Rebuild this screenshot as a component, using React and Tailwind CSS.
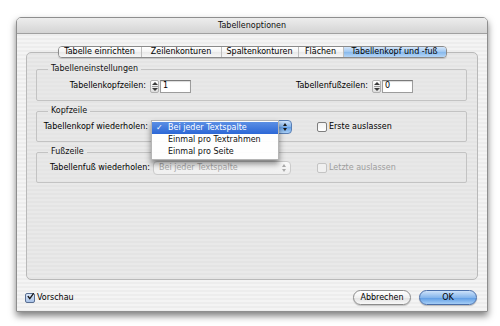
import React from 'react';

const tabs = [
  { label: 'Tabelle einrichten', w: 'w-[82px]' },
  { label: 'Zeilenkonturen', w: 'w-[80px]' },
  { label: 'Spaltenkonturen', w: 'w-[77px]' },
  { label: 'Flächen', w: 'w-[45px]' },
  { label: 'Tabellenkopf und -fuß', w: 'w-[103px]', active: true },
];

const menuItems = ['Bei jeder Textspalte', 'Einmal pro Textrahmen', 'Einmal pro Seite'];

const Stepper = () => (
  <div className="w-[9px] h-[13px] flex flex-col items-center justify-center gap-[1px] border border-[#b0b0b0] rounded-[2px] bg-gradient-to-b from-white to-[#dedede]">
    <span className="w-0 h-0 border-x-[3px] border-x-transparent border-b-[3px] border-b-[#3a3a3a]" />
    <span className="w-[6px] h-px bg-[#9a9a9a]" />
    <span className="w-0 h-0 border-x-[3px] border-x-transparent border-t-[3px] border-t-[#3a3a3a]" />
  </div>
);

const NumberField = ({ value }) => (
  <div className="flex items-center gap-[1px]">
    <Stepper />
    <div className="w-[31px] h-[13px] bg-white border border-[#9c9c9c] border-t-[#7a7a7a] shadow-[inset_0_1px_1px_rgba(0,0,0,0.15)] flex items-center pl-[2px]">
      {value}
    </div>
  </div>
);

const Arrows = ({ color }) => (
  <div className="flex flex-col items-center gap-[2px]">
    <span className={`w-0 h-0 border-x-[2px] border-x-transparent border-b-[3px] ${color === 'dark' ? 'border-b-[#1a1a1a]' : 'border-b-[#aaaaaa]'}`} />
    <span className={`w-0 h-0 border-x-[2px] border-x-transparent border-t-[3px] ${color === 'dark' ? 'border-t-[#1a1a1a]' : 'border-t-[#aaaaaa]'}`} />
  </div>
);

const CheckBox = ({ checked, disabled }) => (
  <span
    className={`w-[10px] h-[10px] rounded-[2px] border flex items-center justify-center ${
      disabled
        ? 'border-[#c4c4c4] bg-[#f0f0f0]'
        : checked
        ? 'border-[#5a6f92] bg-gradient-to-b from-[#dbe7f7] to-[#a9c3e8]'
        : 'border-[#7e7e7e] bg-gradient-to-b from-[#f2f2f2] to-white'
    }`}
  >
    {checked && (
      <svg width="9" height="9" viewBox="0 0 9 9" className="-mt-[2px] ml-[1px]">
        <path d="M1.5 4.5 L3.6 7.2 L8.2 0.8" stroke="#1b1b1b" strokeWidth="1.7" fill="none" strokeLinecap="round" />
      </svg>
    )}
  </span>
);

const Group = ({ title, children }) => (
  <fieldset className="border border-[#c3c3c3] rounded-[2px] px-[6px] pb-[7px] bg-[#e6e6e6]/40">
    <legend className="ml-[5px] px-[3px] h-[10px] leading-[10px] text-[#111]">{title}</legend>
    {children}
  </fieldset>
);

export default function App() {
  return (
    <div className="w-[500px] h-[326px] bg-white pt-[17px] pl-[16px] font-['DejaVu_Sans',sans-serif] text-[8px] text-black">
      <div className="w-[472px] h-[295px] rounded-t-[5px] border border-[#8e8e8e] shadow-[0_4px_7px_rgba(0,0,0,0.5)] overflow-hidden flex flex-col bg-[repeating-linear-gradient(180deg,#ededed_0px,#ededed_2px,#f4f4f4_2px,#f4f4f4_4px)]">
        {/* Title bar */}
        <div className="h-[16px] flex items-center justify-center border-b border-[#a0a0a0] bg-[linear-gradient(180deg,#ededed,#d4d4d4)] text-[#111]">
          Tabellenoptionen
        </div>

        <div className="flex flex-col px-[9px] pt-[12px]">
          {/* Tabs */}
          <div className="relative z-10 flex justify-center h-[12px]">
            <div className="flex h-[12px] rounded-[4px] border border-[#8a8a8a] overflow-hidden shadow-[0_1px_1px_rgba(0,0,0,0.15)]">
              {tabs.map((t, i) => (
                <div
                  key={t.label}
                  className={`${t.w} h-full flex items-center justify-center leading-none ${i > 0 ? 'border-l border-[#bdbdbd]' : ''} ${
                    t.active
                      ? 'bg-[linear-gradient(180deg,#d3e6fb,#9ec6f0_50%,#86b8ec_51%,#b5d6f7)]'
                      : 'bg-[linear-gradient(180deg,#ffffff,#f3f3f3_50%,#e8e8e8_51%,#f7f7f7)]'
                  }`}
                >
                  {t.label}
                </div>
              ))}
            </div>
          </div>

          {/* Tab panel */}
          <div className="-mt-[6px] h-[228px] rounded-[5px] border border-[#b9b9b9] bg-[repeating-linear-gradient(180deg,#e4e4e4_0px,#e4e4e4_2px,#e9e9e9_2px,#e9e9e9_4px)] pl-[9px] pr-[10px] pt-[11px] flex flex-col gap-[5px]">
            <Group title="Tabelleneinstellungen">
              <div className="pt-[5px] flex items-center h-[19px]">
                <span className="w-[107px] text-right pr-[4px]">Tabellenkopfzeilen:</span>
                <NumberField value="1" />
                <span className="w-[181px] text-right pr-[4px]">Tabellenfußzeilen:</span>
                <NumberField value="0" />
              </div>
            </Group>

            <Group title="Kopfzeile">
              <div className="pt-[4px] flex items-center h-[18px]">
                <span className="w-[108px] text-right pr-[3px]">Tabellenkopf wiederholen:</span>
                <div className="relative">
                  <div className="w-[141px] h-[14px] rounded-[4px] border border-[#5a7fb5] bg-[linear-gradient(180deg,#cfe3fa,#7fb0ea_50%,#5f9be3_51%,#a9d0f7)] flex items-center justify-end pr-[4px]">
                    <Arrows color="dark" />
                  </div>
                  {/* Open menu */}
                  <div className="absolute left-0 top-0 w-[128px] bg-white/95 border border-[#b5b5b5] shadow-[0_4px_6px_rgba(0,0,0,0.45)] py-[1px] z-20 text-left">
                    {menuItems.map((m, i) => (
                      <div
                        key={m}
                        className={`h-[12px] flex items-center ${
                          i === 0 ? 'bg-[linear-gradient(180deg,#5b8fe4,#2c67d6)] text-white' : 'text-[#111]'
                        }`}
                      >
                        <span className="w-[16px] shrink-0 pl-[4px]">{i === 0 ? '✓' : ''}</span>
                        <span className="whitespace-nowrap">{m}</span>
                      </div>
                    ))}
                  </div>
                </div>
                <label className="ml-[25px] flex items-center gap-[2px]">
                  <CheckBox />
                  <span>Erste auslassen</span>
                </label>
              </div>
            </Group>

            <Group title="Fußzeile">
              <div className="pt-[4px] flex items-center h-[18px]">
                <span className="w-[110px] text-right pr-[3px]">Tabellenfuß wiederholen:</span>
                <div className="w-[138px] h-[14px] rounded-[4px] border border-[#cbcbcb] bg-[linear-gradient(180deg,#fafafa,#efefef)] flex items-center justify-between pl-[5px] pr-[4px] text-[#a8a8a8]">
                  <span>Bei jeder Textspalte</span>
                  <Arrows />
                </div>
                <label className="ml-[26px] flex items-center gap-[2px] text-[#9d9d9d]">
                  <CheckBox disabled />
                  <span>Letzte auslassen</span>
                </label>
              </div>
            </Group>
          </div>

          {/* Bottom row */}
          <div className="mt-[10px] h-[15px] flex items-center justify-between pr-[1px]">
            <label className="flex items-center gap-[2px] -ml-[1px]">
              <CheckBox checked />
              <span>Vorschau</span>
            </label>
            <div className="flex items-center gap-[8px]">
              <button className="w-[58px] h-[15px] rounded-full border border-[#8c8c8c] bg-[linear-gradient(180deg,#ffffff,#f1f1f1_50%,#e2e2e2_51%,#f8f8f8)] shadow-[0_1px_1px_rgba(0,0,0,0.2)] leading-none">
                Abbrechen
              </button>
              <button className="w-[58px] h-[15px] rounded-full border border-[#4a6ea8] bg-[linear-gradient(180deg,#cde2fa,#86b6ec_50%,#5c9be4_51%,#a5cdf6)] shadow-[0_1px_1px_rgba(0,0,0,0.25)] leading-none">
                OK
              </button>
            </div>
          </div>
        </div>
      </div>
    </div>
  );
}
